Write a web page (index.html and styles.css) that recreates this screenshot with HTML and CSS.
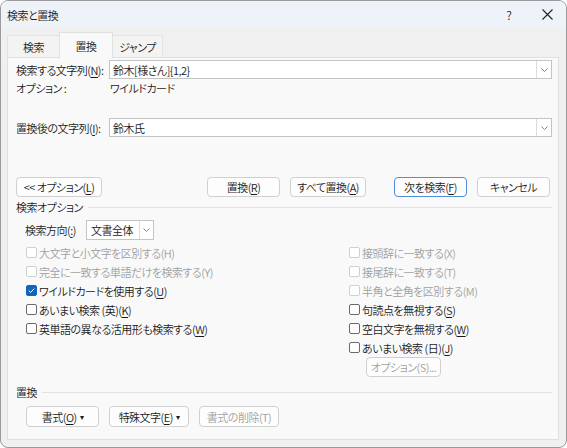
FILE: index.html
```html
<!DOCTYPE html>
<html lang="ja">
<head>
<meta charset="utf-8">
<link rel="stylesheet" href="styles.css">
</head>
<body>
<div class="window">
  <div class="titlebar">
    <span class="title">検索と置換</span>
    <span class="tb-help">?</span>
    <span class="tb-close"><svg width="11" height="11" viewBox="0 0 11 11"><path d="M0.5 0.5 L10.5 10.5 M10.5 0.5 L0.5 10.5" stroke="#222" stroke-width="1.1" fill="none"/></svg></span>
  </div>
  <div class="tabs">
    <div class="tab t1">検索</div>
    <div class="tab t2 active">置換</div>
    <div class="tab t3">ジャンプ</div>
  </div>
  <div class="panel">
    <div class="field-row r1">
      <span class="flabel">検索する文字列(<u>N</u>):</span>
      <div class="combo"><span class="combo-text">鈴木[様さん]{1,2}</span><span class="combo-btn"><svg width="7" height="4" viewBox="0 0 7 4"><path d="M0.5 0.5 L3.5 3.5 L6.5 0.5" stroke="#777" stroke-width="0.9" fill="none"/></svg></span></div>
    </div>
    <div class="opt-row"><span class="flabel">オプション :</span><span class="optval">ワイルドカード</span></div>
    <div class="field-row r3">
      <span class="flabel">置換後の文字列(<u>I</u>):</span>
      <div class="combo"><span class="combo-text">鈴木氏</span><span class="combo-btn"><svg width="7" height="4" viewBox="0 0 7 4"><path d="M0.5 0.5 L3.5 3.5 L6.5 0.5" stroke="#777" stroke-width="0.9" fill="none"/></svg></span></div>
    </div>
    <div class="btn-row">
      <button class="btn b-opt">&lt;&lt; オプション(<u>L</u>)</button>
      <button class="btn b-rep">置換(<u>R</u>)</button>
      <button class="btn b-all">すべて置換(<u>A</u>)</button>
      <button class="btn b-next default">次を検索(<u>F</u>)</button>
      <button class="btn b-cancel">キャンセル</button>
    </div>
    <div class="group-label g1"><span>検索オプション</span><span class="gline"></span></div>
    <div class="dir-row">
      <span class="dlabel">検索方向(<u>:</u>)</span>
      <div class="select"><span class="select-text">文書全体</span><span class="select-btn"><svg width="7" height="4" viewBox="0 0 7 4"><path d="M0.5 0.5 L3.5 3.5 L6.5 0.5" stroke="#777" stroke-width="0.9" fill="none"/></svg></span></div>
    </div>
    <div class="checks">
      <div class="col left">
        <div class="chk disabled"><span class="box"></span>大文字と小文字を区別する(H)</div>
        <div class="chk disabled"><span class="box"></span>完全に一致する単語だけを検索する(Y)</div>
        <div class="chk"><span class="box checked"><svg width="9" height="9" viewBox="0 0 9 9"><path d="M1.8 4.6 L3.7 6.4 L7.3 2.6" stroke="#fff" stroke-width="1" fill="none"/></svg></span>ワイルドカードを使用する(<u>U</u>)</div>
        <div class="chk"><span class="box"></span>あいまい検索 (英)(<u>K</u>)</div>
        <div class="chk"><span class="box"></span>英単語の異なる活用形も検索する(<u>W</u>)</div>
      </div>
      <div class="col right">
        <div class="chk disabled"><span class="box"></span>接頭辞に一致する(X)</div>
        <div class="chk disabled"><span class="box"></span>接尾辞に一致する(T)</div>
        <div class="chk disabled"><span class="box"></span>半角と全角を区別する(M)</div>
        <div class="chk"><span class="box"></span>句読点を無視する(<u>S</u>)</div>
        <div class="chk"><span class="box"></span>空白文字を無視する(<u>W</u>)</div>
        <div class="chk"><span class="box"></span>あいまい検索 (日)(<u>J</u>)</div>
        <button class="btn b-sub disabled-btn">オプション(S)...</button>
      </div>
    </div>
    <div class="group-label g2"><span>置換</span><span class="gline"></span></div>
    <div class="bottom-btns">
      <button class="btn b-fmt">書式(<u>O</u>) <span class="caret">▾</span></button>
      <button class="btn b-spc">特殊文字(<u>E</u>) <span class="caret">▾</span></button>
      <button class="btn b-del disabled-btn">書式の削除(T)</button>
    </div>
  </div>
</div>
</body>
</html>
```
FILE: styles.css
```css
* { box-sizing: border-box; }
html, body { margin: 0; padding: 0; }
body {
  width: 567px;
  height: 448px;
  background: #ffffff;
  font-family: "Noto Sans CJK JP", "Noto Sans", sans-serif;
  font-size: 11px;
  font-weight: 350;
  letter-spacing: -0.5px;
  font-feature-settings: "palt";
  color: #1a1a1a;
  overflow: hidden;
}
u { text-decoration-thickness: 1px; text-underline-offset: 2px; }

.window {
  width: 567px;
  height: 448px;
  border: 1px solid #9a9a9a;
  border-radius: 8px;
  background: #f0f0f0;
  overflow: hidden;
  display: flex;
  flex-direction: column;
}

.titlebar {
  height: 26px;
  background: #eef3f9;
  display: flex;
  align-items: center;
  padding-left: 6px;
  flex-shrink: 0;
}
.title { flex: 1; font-size: 11px; padding-top: 1px; }
.tb-help { width: 38px; text-align: center; font-size: 12px; letter-spacing: 0; }
.tb-close { width: 38px; height: 26px; display: flex; align-items: center; justify-content: center; }

.tabs {
  display: flex;
  align-items: flex-end;
  height: 30px;
  margin-left: 6px;
  flex-shrink: 0;
}
.tab {
  height: 22px;
  display: flex;
  align-items: center;
  justify-content: center;
  background: #f3f3f3;
  border: 1px solid #e3e3e3;
  border-bottom: none;
  font-size: 11px;
}
.t1 { width: 52px; border-right: none; }
.t2 { width: 54px; }
.t3 { width: 50px; border-left: none; }
.tab.active {
  height: 26px;
  background: #f9f9f9;
  border-color: #e0e0e0;
  position: relative;
  top: 1px;
  z-index: 1;
}

.panel {
  margin: 0 7px 7px 6px;
  height: 384px;
  background: #f9f9f9;
  border: 1px solid #e0e0e0;
  padding: 0 6px 0 8px;
  display: flex;
  flex-direction: column;
}

.field-row {
  display: flex;
  align-items: center;
  height: 19px;
}
.r1 { margin-top: 2px; }
.r3 { margin-top: 21px; }
.flabel { width: 93px; flex-shrink: 0; white-space: nowrap; }
.combo {
  flex: 1;
  height: 19px;
  background: #ffffff;
  border: 1px solid #c4c4c4;
  display: flex;
  align-items: center;
}
.combo-text { flex: 1; padding-left: 3px; font-size: 11px; }
.combo-btn {
  width: 15px;
  height: 17px;
  border-left: 1px solid #dcdcdc;
  display: flex;
  align-items: center;
  justify-content: center;
}

.opt-row {
  display: flex;
  align-items: center;
  height: 18px;
}
.optval { padding-left: 1px; }

.btn {
  font-family: inherit;
  font-size: 11px;
  font-weight: 350;
  letter-spacing: -0.5px;
  font-feature-settings: "palt";
  color: #1a1a1a;
  background: #fdfdfd;
  border: 1px solid #d0d0d0;
  border-radius: 4px;
  height: 20px;
  padding: 0;
  margin: 0;
  display: flex;
  align-items: center;
  justify-content: center;
  white-space: nowrap;
}
.btn.default { border-color: #4f8fd6; }
.disabled-btn { color: #a0a0a0; }

.btn-row {
  display: flex;
  margin-top: 40px;
  height: 20px;
}
.b-opt { width: 86px; }
.b-rep { width: 73px; margin-left: 105px; }
.b-all { width: 76px; margin-left: 10px; }
.b-next { width: 73px; margin-left: 28px; }
.b-cancel { width: 73px; margin-left: 10px; }

.group-label {
  display: flex;
  align-items: center;
  height: 16px;
}
.gline { flex: 1; height: 1px; background: #e2e2e2; margin-left: 5px; }
.g1 { margin-top: 2px; }
.g2 { margin-top: 7px; }

.dir-row {
  display: flex;
  align-items: center;
  height: 20px;
  margin-top: 5px;
  padding-left: 9px;
}
.dlabel { width: 61px; }
.select {
  width: 68px;
  height: 20px;
  background: #fff;
  border: 1px solid #c4c4c4;
  display: flex;
  align-items: center;
}
.select-text { flex: 1; padding-left: 4px; }
.select-btn {
  width: 14px;
  height: 18px;
  border-left: 1px solid #dcdcdc;
  display: flex;
  align-items: center;
  justify-content: center;
}

.checks {
  display: flex;
  margin-top: 3px;
}
.col { display: flex; flex-direction: column; }
.col.left { width: 323px; padding-left: 10px; }
.col.right { padding-left: 10px; }
.chk {
  height: 19px;
  display: flex;
  align-items: center;
  white-space: nowrap;
}
.box {
  width: 11px;
  height: 11px;
  border: 1px solid #6a6a6a;
  border-radius: 2px;
  background: #fff;
  margin-right: 2px;
  flex-shrink: 0;
  display: flex;
  align-items: center;
  justify-content: center;
}
.box.checked { background: #0f64c0; border-color: #0f64c0; }
.chk.disabled { color: #a0a0a0; }
.chk.disabled .box { border-color: #cfcfcf; }
.b-sub { width: 75px; margin-left: 17px; }

.bottom-btns {
  display: flex;
  margin-top: 6px;
  padding-left: 10px;
}
.bottom-btns .btn { height: 21px; }
.b-fmt { width: 73px; }
.b-spc { width: 80px; margin-left: 10px; }
.b-del { width: 80px; margin-left: 10px; }
.caret { font-size: 8px; margin-left: 3px; }
```
